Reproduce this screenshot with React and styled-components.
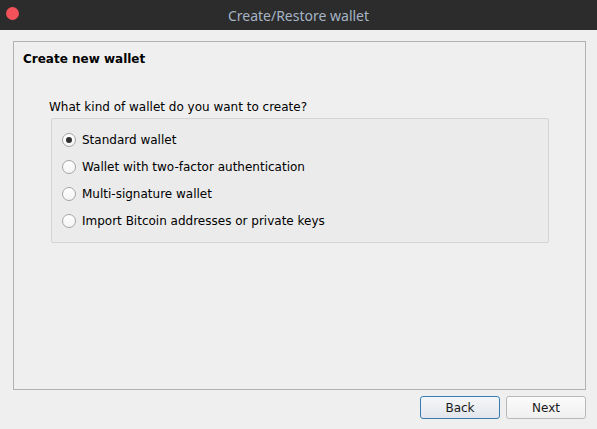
import React from "react";
import styled, { createGlobalStyle } from "styled-components";

const Global = createGlobalStyle`
  html, body { margin: 0; padding: 0; }
  body {
    width: 597px;
    height: 429px;
    overflow: hidden;
    background: #efefef;
    font-family: "DejaVu Sans", sans-serif;
    font-size: 12px;
    color: #000;
  }
`;

const Window = styled.div`
  width: 597px;
  height: 429px;
  display: flex;
  flex-direction: column;
  background: #efefef;
`;

const TitleBar = styled.div`
  height: 30px;
  flex: none;
  background: #2c2c2c;
  display: flex;
  align-items: center;
  justify-content: center;
  position: relative;
  color: #a6b4c5;
  font-family: "Noto Sans", sans-serif;
  font-size: 14px;
`;

const CloseDot = styled.span`
  position: absolute;
  left: 6px;
  top: 7px;
  width: 13px;
  height: 13px;
  border-radius: 50%;
  background: #f3525a;
`;

const Body = styled.div`
  flex: 1;
  display: flex;
  flex-direction: column;
  padding: 11px 11px 10px 13px;
  gap: 6px;
`;

const Panel = styled.div`
  flex: 1;
  border: 1px solid #b2b2b2;
  padding: 9px 9px 0 9px;
  display: flex;
  flex-direction: column;
`;

const Heading = styled.div`
  font-weight: bold;
  font-size: 12px;
  line-height: 16px;
`;

const Content = styled.div`
  margin: 32px 0 0 28px;
  width: 498px;
  display: flex;
  flex-direction: column;
`;

const Question = styled.div`
  line-height: 16px;
  margin-left: -2px;
`;

const Group = styled.div`
  margin-top: 3px;
  height: 125px;
  background: #ebebeb;
  border: 1px solid #d4d4d4;
  border-radius: 2px;
  display: flex;
  flex-direction: column;
  padding: 7px 0 0 10px;
  box-sizing: border-box;
`;

const Option = styled.label`
  height: 27px;
  display: flex;
  align-items: center;
  gap: 6px;
  line-height: 16px;
`;

const Radio = styled.span`
  width: 12px;
  height: 12px;
  border-radius: 50%;
  border: 1px solid #a4a4a4;
  background: linear-gradient(#ffffff, #f4f4f4);
  display: flex;
  align-items: center;
  justify-content: center;
  flex: none;
  &::after {
    content: "";
    width: 6px;
    height: 6px;
    border-radius: 50%;
    background: #303030;
    display: ${(p) => (p.checked ? "block" : "none")};
  }
`;

const Footer = styled.div`
  display: flex;
  justify-content: flex-end;
  gap: 6px;
  height: 23px;
`;

const Button = styled.button`
  width: 80px;
  height: 23px;
  box-sizing: border-box;
  border-radius: 3px;
  font-family: "DejaVu Sans", sans-serif;
  font-size: 12px;
  color: #1a1a1a;
  padding: 0;
  border: 1px solid ${(p) => (p.primary ? "#3a7bb0" : "#b8b8b8")};
  background: ${(p) =>
    p.primary
      ? "linear-gradient(#f6f7f9, #e2e6eb)"
      : "linear-gradient(#fbfbfb, #f0f0f0)"};
`;

const options = [
  "Standard wallet",
  "Wallet with two-factor authentication",
  "Multi-signature wallet",
  "Import Bitcoin addresses or private keys",
];

export default function App() {
  return (
    <Window>
      <Global />
      <TitleBar>
        <CloseDot />
        Create/Restore wallet
      </TitleBar>
      <Body>
        <Panel>
          <Heading>Create new wallet</Heading>
          <Content>
            <Question>What kind of wallet do you want to create?</Question>
            <Group>
              {options.map((o, i) => (
                <Option key={o}>
                  <Radio checked={i === 0} />
                  {o}
                </Option>
              ))}
            </Group>
          </Content>
        </Panel>
        <Footer>
          <Button primary>Back</Button>
          <Button>Next</Button>
        </Footer>
      </Body>
    </Window>
  );
}
